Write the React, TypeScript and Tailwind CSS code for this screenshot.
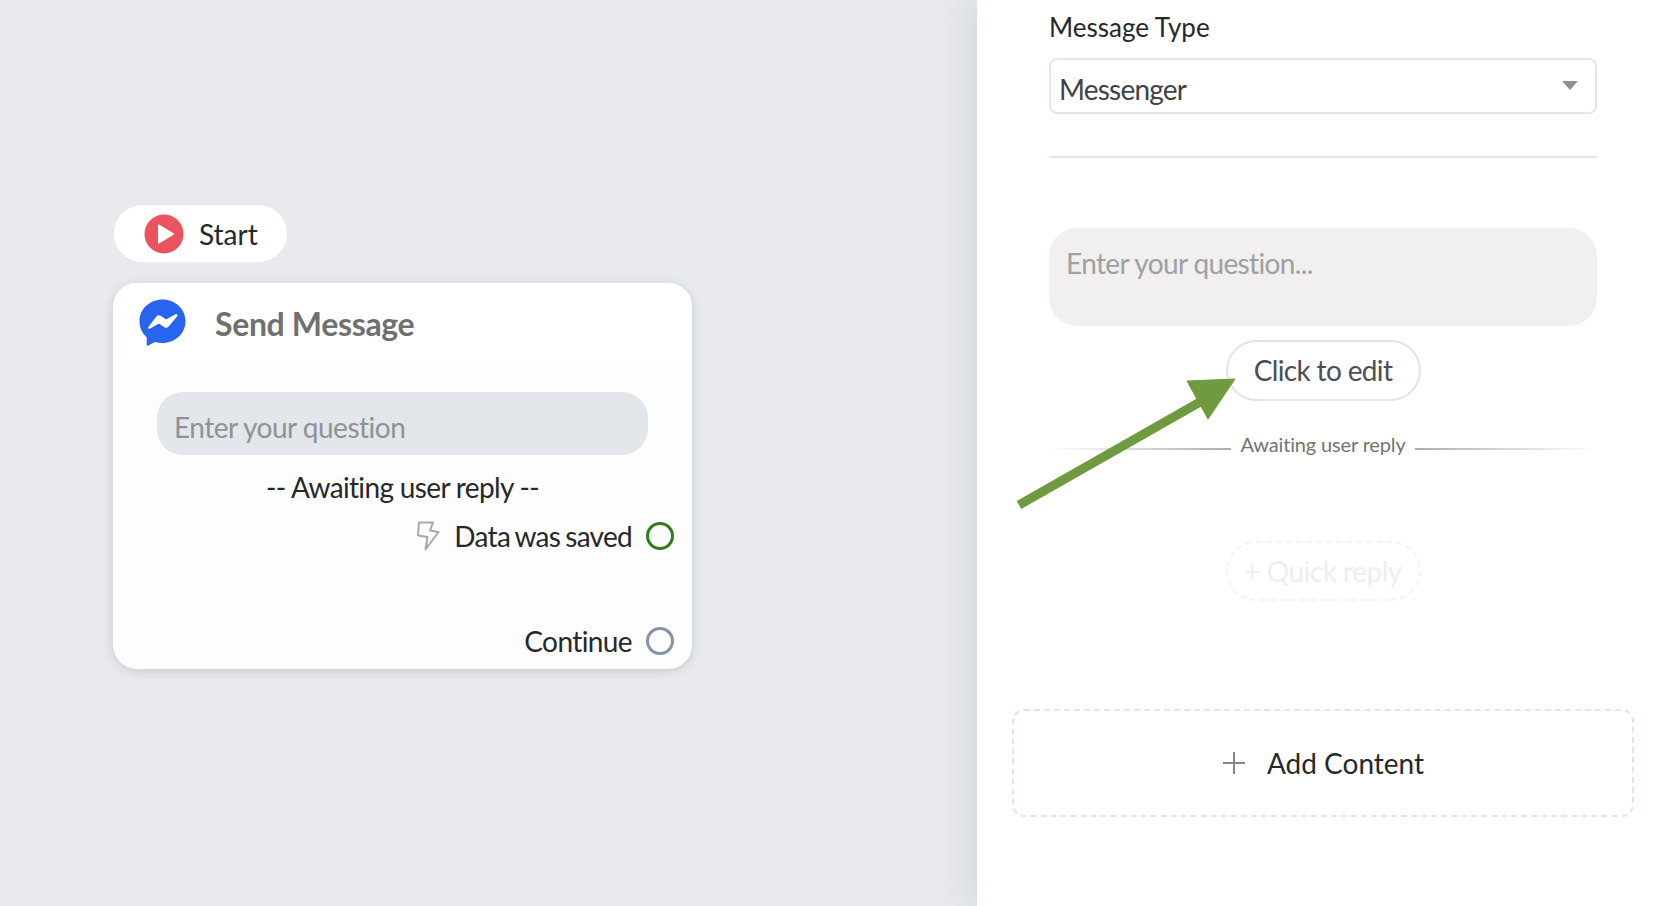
import React from 'react';

const lato = { fontFamily: 'Lato, "Open Sans", sans-serif' };

function PlayIcon() {
  return (
    <svg width="40" height="40" viewBox="0 0 40 40" className="shrink-0">
      <circle cx="20" cy="20" r="19.5" fill="#e9545f" />
      <path d="M15 11.5 L29 20 L15 28.5 Z" fill="#fff" stroke="#fff" strokeWidth="2" strokeLinejoin="round" />
    </svg>
  );
}

function MessengerIcon() {
  return (
    <svg width="47" height="47" viewBox="0 0 47 47" className="shrink-0">
      <path
        d="M23.5 0.5C10.8 0.5 0.5 10 0.5 22.3c0 6.5 2.7 12 7.2 15.9v8.3l1.2 .2 7-3.6c2.4 .7 4.9 1 7.6 1 12.7 0 23-9.6 23-21.8S36.2 .5 23.5 .5z"
        fill="#2764f0"
      />
      <path
        d="M10 28.5 L18 18 c.8-1 2.2-1.2 3.2-.5 L27 21.5 l9.8-5.6 c.6-.3 1.2 .3 .8 .9 L29 27 c-.8 1-2.2 1.2-3.2 .5 L20 23.5 l-9.2 5.4 c-.6 .3-1.2-.4-.8-.4z"
        fill="#fff"
        stroke="#fff"
        strokeWidth="1.6"
        strokeLinejoin="round"
      />
    </svg>
  );
}

function BoltIcon() {
  return (
    <svg width="24" height="30" viewBox="0 0 24 30" fill="none" stroke="#a8a8a8" strokeWidth="2" strokeLinejoin="round">
      <path d="M3 1.5 H17 L14 9.5 L22.5 11 L9.5 28.5 L11.5 16 L2 14.5 Z" />
    </svg>
  );
}

function FlowCanvas() {
  return (
    <div className="relative h-full w-[977px] shrink-0 bg-[#e8eaed]">
      {/* canvas nodes */}
      <div className="absolute left-[114px] top-[205px] flex h-[57px] w-[173px] items-center gap-[15px] rounded-full bg-white pl-[30px] text-[28px] text-[#26282c]">
        <PlayIcon />
        <span>Start</span>
      </div>

      <div className="absolute left-[113px] top-[283px] h-[386px] w-[579px] overflow-hidden rounded-[24px] bg-[#fdfdfd] shadow-[0_2px_10px_rgba(120,130,145,0.3)]">
        <div className="flex h-[82px] items-center bg-white pb-[4px] pl-[26px]">
          <MessengerIcon />
          <span className="ml-[29px] pt-[3px] text-[32px] font-bold tracking-[-0.35px] text-[#707070]">Send Message</span>
        </div>
        <div className="mx-[44px] mt-[27px] flex h-[63px] items-center rounded-[26px] bg-[#e3e6ea] pl-[17px] pt-[6px] text-[28px] tracking-[-0.5px] text-[#8f9296]">
          Enter your question
        </div>
        <div className="mt-[12px] text-center text-[28px] leading-[40px] tracking-[-0.65px] text-[#26282c]">
          -- Awaiting user reply --
        </div>
        <div className="mt-[9px] flex h-[40px] items-center justify-end pr-[18px] text-[28px] text-[#26282c]">
          <BoltIcon />
          <span className="ml-[14px] tracking-[-0.7px] [word-spacing:-1.5px]">Data was saved</span>
          <span className="ml-[14px] h-[28px] w-[28px] rounded-full border-[3px] border-[#2f7d1a]" />
        </div>
        <div className="mt-[65px] flex h-[40px] items-center justify-end pr-[18px] text-[28px] text-[#26282c]">
          <span className="tracking-[-0.6px]">Continue</span>
          <span className="ml-[14px] h-[28px] w-[28px] rounded-full border-[3px] border-[#8493ab]" />
        </div>
      </div>
    </div>
  );
}

function Panel() {
  return (
    <div className="relative h-full flex-1 bg-white shadow-[-14px_0_24px_rgba(150,160,170,0.18)]">
      <div className="pl-[35px] pr-[32px] pt-[8px]">
        <div className="mx-[37px]">
          <div className="text-[26px] leading-[38px] text-[#26282c]">Message Type</div>
          <div className="mt-[12px] flex h-[56px] items-center justify-between rounded-[8px] border-2 border-[#e1e7f0] pl-[8px] pr-[17px] text-[28px] text-[#404246]">
            <span className="pt-[6px] tracking-[-0.8px]">Messenger</span>
            <span className="mb-[2px] h-0 w-0 border-x-[8px] border-t-[9px] border-x-transparent border-t-[#8f8f8f]" />
          </div>
          <div className="mt-[42px] h-[2px] bg-[#e1e5ec]" />
          <div className="mt-[70px] h-[98px] rounded-[28px] bg-[#f1eff0] pl-[17px] pt-[15px] text-[28px] leading-[40px] tracking-[-0.63px] text-[#a0a0a0]">
            Enter your question...
          </div>
          <div className="mt-[14px] flex justify-center">
            <div className="flex h-[61px] w-[195px] items-center justify-center rounded-full border-2 border-[#e0e3ec] pb-[2px] text-[28px] tracking-[-0.65px] text-[#4c4e55]">
              Click to edit
            </div>
          </div>
          <div className="mt-[30px] flex items-center">
            <div className="h-[2px] flex-1 bg-gradient-to-r from-transparent to-[#aeaea8]" />
            <span className="mb-[10px] px-[9px] text-[20px] leading-[26px] tracking-[-0.15px] text-[#74746f]">Awaiting user reply</span>
            <div className="h-[2px] flex-1 bg-gradient-to-l from-transparent to-[#aeaea8]" />
          </div>
          <div className="mt-[74px] flex justify-center">
            <div className="flex h-[60px] w-[195px] items-center justify-center rounded-full border-2 border-dashed border-[#f4f4f5] text-[28px] tracking-[-0.5px] text-[#eeeeef]">
              + Quick reply
            </div>
          </div>
        </div>
        <div className="mt-[108px] flex h-[108px] items-center justify-center rounded-[12px] border-2 border-dashed border-[#d9e7fc] text-[28px] text-[#26282c]">
          <svg width="24" height="24" viewBox="0 0 24 24" stroke="#85878c" strokeWidth="2">
            <path d="M12 1 V23 M1 12 H23" />
          </svg>
          <span className="ml-[21px]">Add Content</span>
        </div>
      </div>
    </div>
  );
}

export default function App() {
  return (
    <div className="relative flex h-[906px] w-[1666px] overflow-hidden" style={lato}>
      <FlowCanvas />
      <Panel />
      {/* annotation arrow over the panel */}
      <svg className="absolute left-[1010px] top-[370px]" width="230" height="150" viewBox="0 0 230 150">
        <path d="M9 135 L190 32" stroke="#6f9a3e" strokeWidth="9" fill="none" />
        <path d="M178 2 L226 0 L199 40 Z" fill="#6f9a3e" stroke="#6f9a3e" strokeWidth="1" transform="translate(-1 9) " />
      </svg>
    </div>
  );
}
